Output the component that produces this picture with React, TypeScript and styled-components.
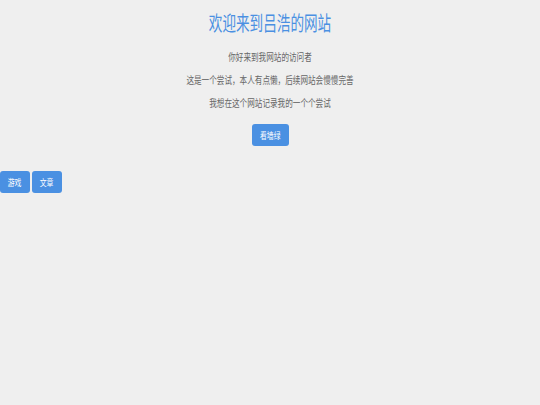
import React from "react";
import styled, {createGlobalStyle} from "styled-components";

const GlobalStyle = createGlobalStyle`
  html, body {
    margin: 0;
    padding: 0;
    background: #efefef;
  }
  body {
    font-family: "Noto Sans CJK SC", "Liberation Sans", sans-serif;
  }
`;

const Page = styled.div`
  width: 540px;
  height: 405px;
  background: #efefef;
`;

const Header = styled.div`
  display: flex;
  flex-direction: column;
  align-items: center;
  padding-top: 10px;
`;

// the reference text is drawn narrower than the font, so squeeze it
const Title = styled.h1`
  margin: 0;
  font-size: 20px;
  line-height: 26px;
  font-weight: 400;
  color: #4a90e2;
  transform: scaleX(0.68);
`;

const Line = styled.p`
  margin: 0;
  font-size: 10px;
  line-height: 23px;
  color: #666;
  transform: scaleX(0.76);
  &:first-of-type {
    margin-top: 9px;
  }
`;

const Button = styled.button<{ w: number }>`
  display: flex;
  align-items: center;
  justify-content: center;
  border: none;
  border-radius: 3px;
  background: #4a90e2;
  color: #fff;
  font-family: inherit;
  width: ${p => p.w}px;
  height: 22px;
  padding: 0;
  cursor: pointer;
`;

const Label = styled.span`
  display: inline-block;
  font-size: 9.5px;
  transform: scaleX(0.72);
  white-space: nowrap;
`;

const Main = styled.div`
  margin-top: 10px;
`;

const Nav = styled.div`
  display: flex;
  gap: 2px;
  margin-top: 25px;
`;

export default function App() {
    return (
        <Page>
            <GlobalStyle/>
            <Header>
                <Title>欢迎来到吕浩的网站</Title>
                <Line>你好来到我网站的访问者</Line>
                <Line>这是一个尝试，本人有点懒，后续网站会慢慢完善</Line>
                <Line>我想在这个网站记录我的一个个尝试</Line>
                <Main>
                    <Button w={37}><Label>看墙绿</Label></Button>
                </Main>
            </Header>
            <Nav>
                <Button w={30}><Label>游戏</Label></Button>
                <Button w={30}><Label>文章</Label></Button>
            </Nav>
        </Page>
    );
}
